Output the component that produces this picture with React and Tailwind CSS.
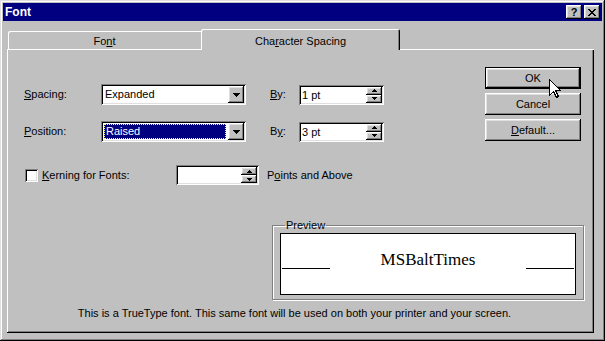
import React from "react";

const raised =
  "shadow-[inset_-1px_-1px_0_#000,inset_1px_1px_0_#fff,inset_-2px_-2px_0_#808080,inset_2px_2px_0_#dfdfdf]";
const sunken =
  "shadow-[inset_1px_1px_0_#808080,inset_-1px_-1px_0_#fff,inset_2px_2px_0_#000,inset_-2px_-2px_0_#dfdfdf]";

function DownArrow() {
  return (
    <svg width="7" height="4" shapeRendering="crispEdges">
      <path d="M0 0h7v1H0zM1 1h5v1H1zM2 2h3v1H2zM3 3h1v1H3z" fill="#000" />
    </svg>
  );
}

function SmallArrow({ up }) {
  return (
    <svg width="5" height="3" shapeRendering="crispEdges">
      {up ? (
        <path d="M2 0h1v1H2zM1 1h3v1H1zM0 2h5v1H0z" fill="#000" />
      ) : (
        <path d="M0 0h5v1H0zM1 1h3v1H1zM2 2h1v1H2z" fill="#000" />
      )}
    </svg>
  );
}

function Combo({ value, selected }) {
  return (
    <div className={`flex h-[21px] w-[145px] bg-white p-[2px] ${sunken}`}>
      <div className="flex-1 flex items-center pl-px pr-[2px]">
        {selected ? (
          <div className="h-[15px] w-full bg-[#000080] text-white border border-dotted border-[#ffff80] flex items-center pl-px leading-[13px]">
            {value}
          </div>
        ) : (
          <span className="pl-[1px] leading-[13px]">{value}</span>
        )}
      </div>
      <div className={`w-[16px] h-full flex items-center justify-center bg-[#c0c0c0] ${raised}`}>
        <DownArrow />
      </div>
    </div>
  );
}

function Spin({ value, width }) {
  return (
    <div className={`flex h-[20px] ${width} bg-white p-[2px] ${sunken}`}>
      <div className="flex-1 pl-[1px] leading-[16px]">{value}</div>
      <div className="w-[16px] flex flex-col">
        <div className={`h-[8px] flex items-center justify-center bg-[#c0c0c0] ${raised}`}>
          <SmallArrow up />
        </div>
        <div className={`h-[8px] flex items-center justify-center bg-[#c0c0c0] ${raised}`}>
          <SmallArrow />
        </div>
      </div>
    </div>
  );
}

function Button({ children, isDefault }) {
  return (
    <div className={`h-[22px] w-[96px] ${isDefault ? "border border-black" : ""}`}>
      <div className={`h-full w-full flex items-center justify-center bg-[#c0c0c0] ${raised}`}>
        {children}
      </div>
    </div>
  );
}

export default function App() {
  return (
    <div className="relative w-[605px] h-[341px] bg-[#c0c0c0] p-[3px] text-[11px] text-black font-['Liberation_Sans',Arial,sans-serif] shadow-[inset_-1px_-1px_0_#000,inset_1px_1px_0_#dfdfdf,inset_-2px_-2px_0_#808080,inset_2px_2px_0_#fff]">
      {/* Title bar */}
      <div className="h-[18px] bg-[#000080] flex items-center justify-between pl-[2px] pr-[2px]">
        <span className="text-white font-bold text-[12px] leading-none">Font</span>
        <div className="flex gap-[2px]">
          <div className={`w-[16px] h-[14px] flex items-center justify-center bg-[#c0c0c0] font-bold text-[11px] leading-none ${raised}`}>
            ?
          </div>
          <div className={`w-[16px] h-[14px] flex items-center justify-center bg-[#c0c0c0] ${raised}`}>
            <svg width="8" height="7" shapeRendering="crispEdges">
              <path
                d="M0 0h2v1H0zM6 0h2v1H6zM1 1h2v1H1zM5 1h2v1H5zM2 2h4v1H2zM3 3h2v1H3zM2 4h4v1H2zM1 5h2v1H1zM5 5h2v1H5zM0 6h2v1H0zM6 6h2v1H6z"
                fill="#000"
              />
            </svg>
          </div>
        </div>
      </div>

      {/* Tabs */}
      <div className="mt-[8px] ml-[4px] w-[587px] h-[21px] flex items-start shadow-[inset_0_-1px_0_#fff]">
        <div className="ml-[1px] mt-[2px] w-[193px] h-[18px] flex items-center justify-center pt-[2px] rounded-tl-[2px] shadow-[inset_1px_1px_0_#fff]">
          Fo<u className="underline-offset-[1px]">n</u>t
        </div>
        <div className="w-[199px] h-[21px] bg-[#c0c0c0] flex items-center justify-center pt-[3px] rounded-t-[2px] shadow-[inset_1px_1px_0_#fff,inset_-1px_0_0_#000,inset_-2px_0_0_#808080]">
          Cha<u className="underline-offset-[1px]">r</u>acter Spacing
        </div>
      </div>

      {/* Panel */}
      <div className="ml-[4px] w-[587px] h-[283px] pt-[17px] pl-[17px] pr-[13px] flex flex-col shadow-[inset_-1px_-1px_0_#000,inset_1px_0_0_#fff,inset_-2px_-2px_0_#808080]">
        <div className="flex justify-between items-start">
          <div className="mt-[17px] flex flex-col">
            <div className="flex items-center h-[21px]">
              <div className="w-[77px]">
                <u>S</u>pacing:
              </div>
              <Combo value="Expanded" />
              <div className="ml-[24px] w-[29px]">
                <u>B</u>y:
              </div>
              <Spin value="1 pt" width="w-[85px]" />
            </div>
            <div className="flex items-center h-[21px] mt-[16px]">
              <div className="w-[77px]">
                <u>P</u>osition:
              </div>
              <Combo value="Raised" selected />
              <div className="ml-[24px] w-[29px]">
                B<u>y</u>:
              </div>
              <Spin value="3 pt" width="w-[85px]" />
            </div>
            <div className="flex items-center h-[20px] mt-[23px]">
              <div className={`ml-px w-[13px] h-[13px] bg-white ${sunken}`} />
              <div className="ml-[4px] w-[134px]">
                <u>K</u>erning for Fonts:
              </div>
              <Spin value="" width="w-[83px]" />
              <div className="ml-[8px]">
                P<u>o</u>ints and Above
              </div>
            </div>
          </div>

          <div className="flex flex-col gap-[4px]">
            <Button isDefault>OK</Button>
            <Button>Cancel</Button>
            <Button>
              <span>
                <u>D</u>efault...
              </span>
            </Button>
          </div>
        </div>

        {/* Preview */}
        <fieldset className="self-end mr-[-3px] mt-[34px] w-[312px] h-[81px] border border-[#808080] px-[7px] pb-[4px] shadow-[1px_1px_0_#fff,inset_1px_1px_0_#fff]">
          <legend className="ml-[5px] px-[1px] leading-[13px]">Preview</legend>
          <div className="mt-[1px] h-[62px] border border-black bg-white flex flex-col pt-[17px]">
            <div className="flex items-end justify-between h-[18px] px-[1px]">
              <div className="w-[48px] h-px bg-black" />
              <span className="font-['Liberation_Serif',serif] text-[17px] leading-[18px]">
                MSBaltTimes
              </span>
              <div className="w-[48px] h-px bg-black" />
            </div>
          </div>
        </fieldset>

        <div className="mt-[7px] pr-[16px] text-center leading-[13px]">
          This is a TrueType font. This same font will be used on both your printer and your screen.
        </div>
      </div>

      {/* Mouse pointer */}
      <svg
        className="absolute left-[549px] top-[79px]"
        width="13"
        height="20"
        shapeRendering="crispEdges"
      >
        <path
          d="M0.5 0.5V16.5L4.5 12.5L7.5 18.5L9.5 17.5L6.5 11.5H11.5Z"
          fill="#fff"
          stroke="#000"
          strokeWidth="1"
        />
      </svg>
    </div>
  );
}
